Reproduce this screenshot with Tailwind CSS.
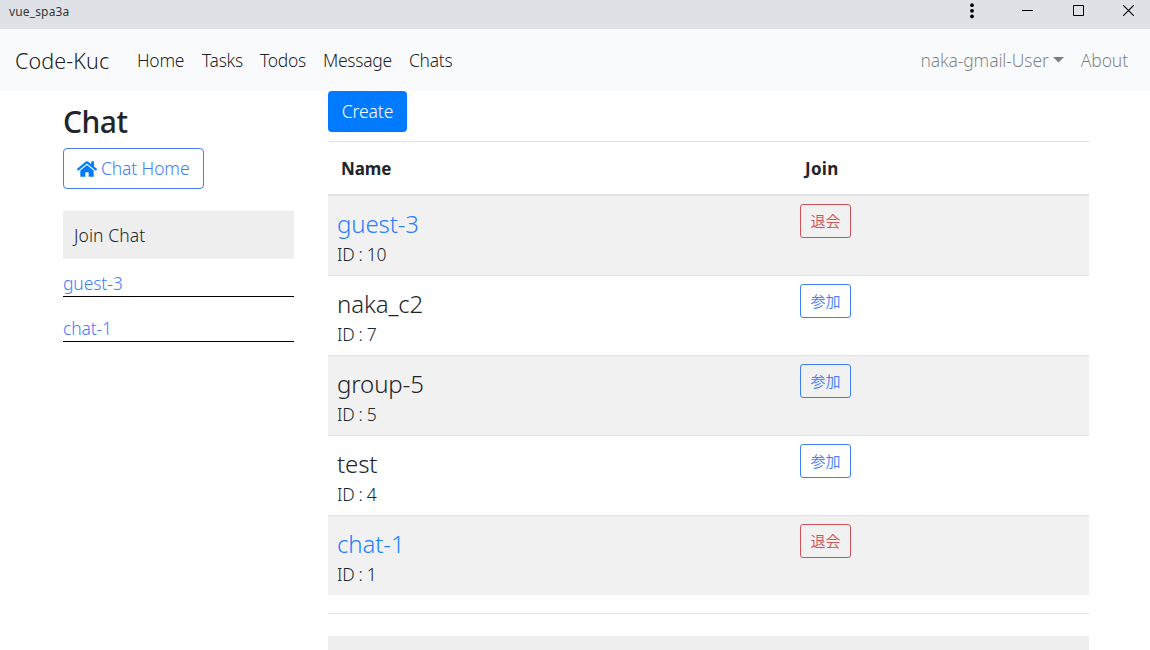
<!DOCTYPE html>
<html lang="ja">

<head>
  <meta charset="UTF-8">
  <meta name="viewport" content="width=device-width, initial-scale=1.0">
  <title>vue_spa3a</title>
  <script src="https://cdn.jsdelivr.net/npm/@tailwindcss/browser@4"></script>
</head>

<body class="h-screen overflow-hidden flex flex-col bg-white text-[#212529] text-[17.5px] leading-[27px] tracking-[-0.12px] font-['Noto_Sans','Noto_Sans_CJK_JP',sans-serif]">

  <!-- window title bar -->
  <div class="h-[29px] shrink-0 bg-[#dee1e6] flex items-start justify-between pl-[9px] pr-4 text-black">
    <span class="text-xs leading-6 tracking-[0.15px] text-black/80">vue_spa3a</span>
    <div class="flex items-center h-[21px]">
      <svg class="w-1 h-4 mr-[48px]" viewBox="0 0 4 16"><circle cx="2" cy="2.2" r="1.9"/><circle cx="2" cy="7.8" r="1.9"/><circle cx="2" cy="13.4" r="1.9"/></svg>
      <svg class="w-[11px] h-[11px] mr-10" viewBox="0 0 11 11" stroke="#000"><path d="M0 5.5h11"/></svg>
      <svg class="w-[11px] h-[11px] mr-[39px]" viewBox="0 0 11 11" stroke="#000" fill="none"><path d="M.5.5h10v10H.5z"/></svg>
      <svg class="w-[11px] h-[11px]" viewBox="0 0 11 11" stroke="#000" stroke-width="1.1" fill="none"><path d="M0 0l11 11M11 0L0 11"/></svg>
    </div>
  </div>

  <!-- navbar -->
  <nav class="h-[62px] shrink-0 bg-[#f8fafc] flex items-center justify-between pl-[15px] pr-[22px] font-[330]">
    <div class="flex items-center text-black/90 tracking-[-0.3px]">
      <a class="text-[21.5px] w-[122px] tracking-[0.1px]">Code-Kuc</a>
      <a class="w-[65px]">Home</a>
      <a class="w-[58px]">Tasks</a>
      <a class="w-[63px]">Todos</a>
      <a class="w-[86px]">Message</a>
      <a>Chats</a>
    </div>
    <div class="flex items-center text-black/50">
      <a class="flex items-center">naka-gmail-User
        <svg class="w-[11px] h-[6px] ml-1" viewBox="0 0 11 6" fill="currentColor"><path d="M0 0h11L5.5 5.5z"/></svg>
      </a>
      <a class="ml-[17px]">About</a>
    </div>
  </nav>

  <main class="flex-1 min-h-0 overflow-hidden flex items-start pl-[63px] font-[330]">
    <!-- sidebar -->
    <div class="w-[231px] mr-[34px] shrink-0">
      <h2 class="mt-[12px] mb-[7px] text-[30px] leading-[38px] font-medium tracking-[-0.5px]">Chat</h2>
      <a class="w-[141px] h-[41px] flex items-center pl-[13px] border border-[#4a7bf0] rounded text-[#3f7cfb]">
        <svg class="w-5 h-[18px] mr-1" viewBox="0 0 576 512" fill="#007bff"><path d="M280 148 96 300v164a16 16 0 0 0 16 16l112-.3a16 16 0 0 0 16-16V368a16 16 0 0 1 16-16h64a16 16 0 0 1 16 16v96a16 16 0 0 0 16 16l112 .3a16 16 0 0 0 16-16V300L296 148a12 12 0 0 0-15 0zM572 251l-84-69V44a12 12 0 0 0-12-12h-56a12 12 0 0 0-12 12v72l-89-74a48 48 0 0 0-61 0L5 251a12 12 0 0 0-2 17l26 31a12 12 0 0 0 17 2L280 107a12 12 0 0 1 15 0l235 194a12 12 0 0 0 17-2l26-31a12 12 0 0 0-1-17z"/></svg>
        Chat Home
      </a>
      <div class="h-12 mt-[22px] flex items-center pl-[11px] bg-[#eee] tracking-[0.1px]">Join Chat</div>
      <ul class="text-[#3f7cfb]">
        <li class="h-[38px] flex items-end border-b border-black leading-[26px]">guest-3</li>
        <li class="h-[45px] flex items-end border-b border-black leading-[26px]">chat-1</li>
      </ul>
    </div>

    <!-- chat list -->
    <div class="w-[761px] shrink-0">
      <button class="block w-[79px] h-[41px] mb-[9px] rounded bg-[#007bff] text-white">Create</button>
      <table class="w-full table-fixed border-separate border-spacing-0">
        <thead>
          <tr class="h-[55px] text-left text-[17px]">
            <th class="w-[464px] pl-[13px] border-t border-b-2 border-[#dee2e6] font-bold">Name</th>
            <th class="pl-[13px] border-t border-b-2 border-[#dee2e6] font-bold tracking-[0.3px]">Join</th>
          </tr>
        </thead>
        <tbody>
          <tr class="h-[79px] bg-[#f1f1f1] align-top">
            <td class="pl-[9px] pt-[12px]"><p class="text-2xl leading-8 mb-px text-[#2d7dfb]">guest-3</p><p class="tracking-[-0.3px]">ID : 10</p></td>
            <td class="pl-2 pt-2"><button class="w-[51px] h-[34px] border border-[#d0505a] rounded-[3px] text-[#d0505a] text-[15px] tracking-normal">退会</button></td>
          </tr>
          <tr class="h-20 align-top">
            <td class="pl-[9px] pt-[12px] border-t border-[#dee2e6]"><p class="text-2xl leading-8 mb-px">naka_c2</p><p class="tracking-[-0.3px]">ID : 7</p></td>
            <td class="pl-2 pt-2 border-t border-[#dee2e6]"><button class="w-[51px] h-[34px] border border-[#3f7cfb] rounded-[3px] text-[#3f7cfb] text-[15px] tracking-normal">参加</button></td>
          </tr>
          <tr class="h-20 bg-[#f1f1f1] align-top">
            <td class="pl-[9px] pt-[12px] border-t border-[#dee2e6]"><p class="text-2xl leading-8 mb-px">group-5</p><p class="tracking-[-0.3px]">ID : 5</p></td>
            <td class="pl-2 pt-2 border-t border-[#dee2e6]"><button class="w-[51px] h-[34px] border border-[#3f7cfb] rounded-[3px] text-[#3f7cfb] text-[15px] tracking-normal">参加</button></td>
          </tr>
          <tr class="h-20 align-top">
            <td class="pl-[9px] pt-[12px] border-t border-[#dee2e6]"><p class="text-2xl leading-8 mb-px">test</p><p class="tracking-[-0.3px]">ID : 4</p></td>
            <td class="pl-2 pt-2 border-t border-[#dee2e6]"><button class="w-[51px] h-[34px] border border-[#3f7cfb] rounded-[3px] text-[#3f7cfb] text-[15px] tracking-normal">参加</button></td>
          </tr>
          <tr class="h-20 bg-[#f1f1f1] align-top">
            <td class="pl-[9px] pt-[12px] border-t border-[#dee2e6]"><p class="text-2xl leading-8 mb-px text-[#1f80ff]">chat-1</p><p class="tracking-[-0.3px]">ID : 1</p></td>
            <td class="pl-2 pt-2 border-t border-[#dee2e6]"><button class="w-[51px] h-[34px] border border-[#d0505a] rounded-[3px] text-[#d0505a] text-[15px] tracking-normal">退会</button></td>
          </tr>
        </tbody>
      </table>
      <hr class="mt-[18px] mb-[22px] border-black/10">
      <div class="h-[14px] bg-[#eee]"></div>
    </div>
  </main>

</body>

</html>
